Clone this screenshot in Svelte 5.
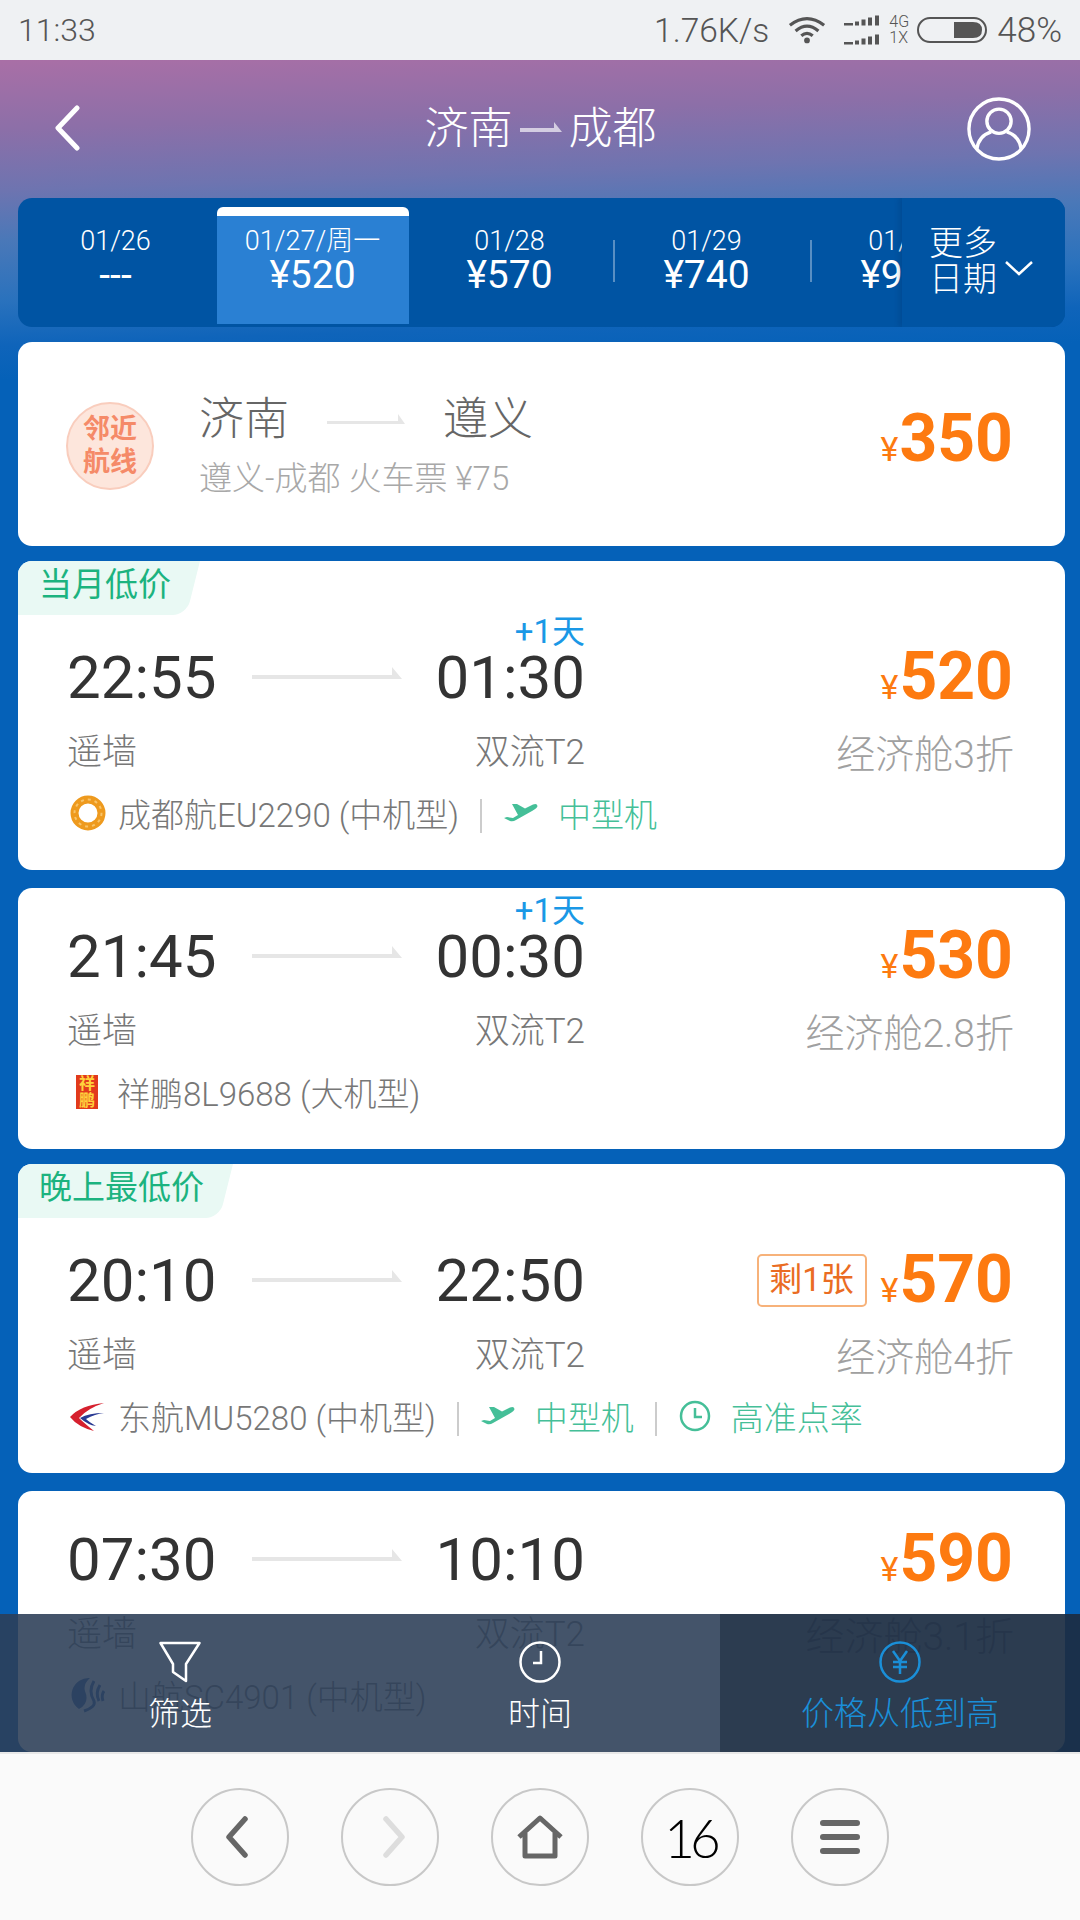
<script>
	const dates = [
		{ date: '01/26', price: '---' },
		{ date: '01/27/周一', price: '¥520', active: true },
		{ date: '01/28', price: '¥570', sep: true },
		{ date: '01/29', price: '¥740', sep: true },
		{ date: '01/30', price: '¥920' }
	];

	const flights = [
		{
			tag: '当月低价', dep: '22:55', arr: '01:30', plus: '+1天', price: 520, cabin: '经济舱3折',
			airline: '成都航EU2290 (中机型)', logo: 'eu', plane: true, gap: 18
		},
		{
			dep: '21:45', arr: '00:30', plus: '+1天', price: 530, cabin: '经济舱2.8折',
			airline: '祥鹏8L9688 (大机型)', logo: '8l', gap: 15
		},
		{
			tag: '晚上最低价', dep: '20:10', arr: '22:50', price: 570, cabin: '经济舱4折', left: '剩1张',
			airline: '东航MU5280 (中机型)', logo: 'mu', plane: true, onTime: true, gap: 18
		},
		{
			dep: '07:30', arr: '10:10', price: 590, cabin: '经济舱3.1折',
			airline: '山航SC4901 (中机型)', logo: 'sc', gap: 15
		}
	];
</script>

{#snippet arrow()}
	<svg class="arrow" width="150" height="16" viewBox="0 0 150 16"><polygon points="0,9 140,9 140,1 150,13 0,13" fill="#e6e6e6" /></svg>
{/snippet}

{#snippet plane()}
	<svg class="mini" width="34" height="20" viewBox="0 0 34 20"><path d="M8 1 L13 1 L21 5.5 L29 1.5 Q33 0 33.5 3 Q33.5 5 28 8 L12 17 Q9 19 6 18 L0 15 L3 14 L9 15 L14 12 Z" fill="#45bf98" /></svg>
{/snippet}

<div class="app">
	<div class="status">
		<span class="clock">11:33</span>
		<div class="status-right">
			<span class="speed">1.76K/s</span>
			<svg width="38" height="30" viewBox="0 0 40 30" fill="none" stroke="#555" stroke-width="3.4">
				<path d="M2 10 Q20 -4 38 10" />
				<path d="M8 16 Q20 6 32 16" />
				<path d="M14 21 Q20 16 26 21" />
				<circle cx="20" cy="26" r="3" fill="#555" stroke="none" />
			</svg>
			<svg class="signal" width="38" height="30" viewBox="0 0 38 30" fill="#555">
				<rect x="0" y="8" width="9" height="2.5" /><rect x="11" y="6.5" width="4" height="4" /><rect x="17.5" y="4.5" width="4" height="6" /><rect x="24" y="2.5" width="4" height="8" /><rect x="31" y="0.5" width="4" height="10" />
				<rect x="0" y="27" width="9" height="2.5" /><rect x="11" y="25.5" width="4" height="4" /><rect x="17.5" y="23.5" width="4" height="6" /><rect x="24" y="21.5" width="4" height="8" /><rect x="31" y="19.5" width="4" height="10" />
			</svg>
			<div class="net"><span>4G</span><span>1X</span></div>
			<svg width="71" height="26" viewBox="0 0 71 26" class="battery">
				<rect x="1" y="1" width="68" height="24" rx="12" fill="none" stroke="#555" stroke-width="2" />
				<path d="M37 5 H56 Q65 5 65 13 Q65 21 56 21 H37 Z" fill="#555" />
			</svg>
			<span class="pct">48%</span>
		</div>
	</div>

	<main class="page">
		<header class="head">
			<svg class="back" width="26" height="46" viewBox="0 0 26 46" fill="none" stroke="#fff" stroke-width="5" stroke-linecap="round" stroke-linejoin="round"><path d="M23 3 L4 23 L23 43" /></svg>
			<div class="route">
				<span>济南</span>
				<svg width="42" height="14" viewBox="0 0 42 14"><polygon points="0,6 34,6 34,0 42,10 0,10" fill="#fff" fill-opacity=".65" /></svg>
				<span>成都</span>
			</div>
			<svg class="user" width="64" height="64" viewBox="0 0 66 66" fill="none" stroke="#fff" stroke-width="3.5">
				<circle cx="33" cy="33" r="31" />
				<circle cx="33" cy="25" r="12.5" />
				<path d="M10 54 Q12 40 25 36 M56 54 Q54 40 41 36" />
			</svg>
		</header>

		<div class="dates">
			<div class="strip">
				{#each dates as d}
					<div class="cell" class:active={d.active} class:sep={d.sep}>
						<div class="d">{d.date}</div>
						<div class="p">{d.price}</div>
					</div>
				{/each}
			</div>
			<div class="more">
				<span>更多<br />日期</span>
				<svg width="30" height="16" viewBox="0 0 30 16" fill="none" stroke="#fff" stroke-width="2.5"><path d="M2 2 L15 14 L28 2" /></svg>
			</div>
		</div>

		<div class="list">
			<section class="card near">
				<div class="badge"><span>邻近</span><span>航线</span></div>
				<div class="near-info">
					<div class="near-route">
						<span>济南</span>
						<svg width="78" height="14" viewBox="0 0 78 14"><polygon points="0,8 71,8 71,1 78,11 0,11" fill="#e6e6e6" /></svg>
						<span>遵义</span>
					</div>
					<div class="near-sub">遵义-成都 火车票 ¥75</div>
				</div>
				<div class="price near-price"><small>¥</small>350</div>
			</section>

			{#each flights as f}
				<section class="card flight" class:tagged={f.tag} style="margin-bottom: {f.gap}px">
					{#if f.tag}
						<div class="tag">{f.tag}</div>
					{/if}
					<div class="times">
						<span class="time">{f.dep}</span>
						{@render arrow()}
						<span class="time arr">
							{f.arr}
							{#if f.plus}<em>{f.plus}</em>{/if}
						</span>
					</div>
					<div class="price">
						{#if f.left}<span class="left">{f.left}</span>{/if}
						<small>¥</small>{f.price}
					</div>
					<div class="ports"><span>遥墙</span><span>双流T2</span></div>
					<div class="cabin">{f.cabin}</div>
					<div class="meta">
						{#if f.logo === 'eu'}
							<svg class="logo" width="36" height="36" viewBox="0 0 36 36"><circle cx="18" cy="18" r="13.5" fill="none" stroke="#ee9a1e" stroke-width="8" /><circle cx="18" cy="18" r="13.5" fill="none" stroke="#f8c46a" stroke-width="2" stroke-dasharray="3 4" /></svg>
						{:else if f.logo === '8l'}
							<div class="logo stamp"><span>祥</span><span>鹏</span></div>
						{:else if f.logo === 'mu'}
							<svg class="logo" width="36" height="36" viewBox="0 0 36 36"><path d="M34 5 Q11 7 0 19 Q8 29 24 33 Q14 25 9 20 Q18 10 34 5 Z" fill="#d6202e" /><path d="M34 15 Q19 15 10 20 Q18 27 26 28 Q19 24 16 21 Q25 16 34 15 Z" fill="#2a3a93" /></svg>
						{:else}
							<svg class="logo" width="36" height="36" viewBox="0 0 36 36"><path d="M20 1 A17 17 0 0 0 9 32 Q20 26 15 14 Q13 7 20 1 Z" fill="#2a5ea8" /><path d="M24 4 Q18 14 24 24 Q26 30 14 34 M30 8 Q25 16 29 24 M34 14 Q31 18 33 24" stroke="#2a5ea8" stroke-width="3" fill="none" /></svg>
						{/if}
						<span class="airline">{f.airline}</span>
						{#if f.plane}
							<i class="bar"></i>
							{@render plane()}
							<span class="green">中型机</span>
						{/if}
						{#if f.onTime}
							<i class="bar"></i>
							<svg class="mini" width="32" height="32" viewBox="0 0 32 32" fill="none" stroke="#45bf98" stroke-width="2.5"><circle cx="16" cy="16" r="14" /><path d="M16 8 V17 H23" /></svg>
							<span class="green">高准点率</span>
						{/if}
					</div>
				</section>
			{/each}
		</div>

		<div class="filter">
			<div class="opt">
				<svg width="42" height="42" viewBox="0 0 42 42" fill="none" stroke="#fff" stroke-width="2.5" stroke-linejoin="round"><path d="M1.5 2 H40.5 L27 23 V40 L14 31 V23 Z" /></svg>
				<span>筛选</span>
			</div>
			<div class="opt">
				<svg width="42" height="42" viewBox="0 0 42 42" fill="none" stroke="#fff" stroke-width="2.5"><circle cx="21" cy="21" r="19.5" /><path d="M22 10 V22 H14" /></svg>
				<span>时间</span>
			</div>
			<div class="opt on">
				<svg width="42" height="42" viewBox="0 0 42 42" fill="none" stroke="#1a8fd8" stroke-width="2.5"><circle cx="21" cy="21" r="19.5" /><path d="M14 10 L21 20 L28 10 M21 20 V33 M14 21 H28 M14 26 H28" /></svg>
				<span>价格从低到高</span>
			</div>
		</div>
	</main>

	<nav class="nav">
		<div class="btn prev"><svg width="24" height="42" viewBox="0 0 24 42" fill="none" stroke="#666" stroke-width="5.5" stroke-linecap="round" stroke-linejoin="round"><path d="M20 3 L4 21 L20 39" /></svg></div>
		<div class="btn next"><svg width="24" height="42" viewBox="0 0 24 42" fill="none" stroke="#ddd" stroke-width="5.5" stroke-linecap="round" stroke-linejoin="round"><path d="M4 3 L20 21 L4 39" /></svg></div>
		<div class="btn"><svg width="46" height="44" viewBox="0 0 46 44" fill="none" stroke="#666" stroke-width="5" stroke-linejoin="round"><path d="M2 22 L23 3 L44 22 M8 18 V41 H38 V18" /></svg></div>
		<div class="btn num">16</div>
		<div class="btn lines"><i></i><i></i><i></i></div>
	</nav>
</div>

<style>
	:global(body) {
		margin: 0;
	}

	.app {
		width: 1080px;
		height: 1920px;
		display: flex;
		flex-direction: column;
		overflow: hidden;
		font-family: Roboto, 'Noto Sans CJK SC', sans-serif;
	}

	/* status bar */
	.status {
		flex: 0 0 60px;
		display: flex;
		align-items: center;
		justify-content: space-between;
		padding: 0 18px;
		box-sizing: border-box;
		background: #eff1f3;
		color: #555;
		font-size: 32px;
		font-weight: 300;
	}
	.status-right {
		display: flex;
		align-items: center;
	}
	.speed {
		font-size: 33.5px;
		margin-right: 19px;
	}
	.signal {
		margin-left: 18px;
	}
	.net {
		display: flex;
		flex-direction: column;
		width: 28px;
		margin-left: 7px;
		font-size: 16px;
		line-height: 16px;
	}
	.pct {
		font-size: 35px;
		margin-left: 9px;
	}

	/* page */
	.page {
		flex: 1;
		position: relative;
		overflow: hidden;
		background: linear-gradient(178deg, #a96fa6 0, #8c6fa8 70px, #6e74b0 130px, #4a78b8 180px, #2a72bd 240px, #0f64ba 285px, #0561b8 320px);
	}

	.head {
		height: 138px;
		display: flex;
		align-items: center;
		justify-content: space-between;
		padding: 0 49px 0 54px;
		box-sizing: border-box;
	}
	.back {
		margin-top: -2px;
	}
	.route {
		display: flex;
		align-items: center;
		gap: 7px;
		color: #fff;
		font-size: 44px;
		font-weight: 300;
		margin-top: -8px;
		margin-left: 34px;
	}
	.route svg {
		margin-top: 8px;
	}

	/* date strip */
	.dates {
		height: 129px;
		margin: 0 15px 0 18px;
		border-radius: 14px;
		background: #0054a3;
		position: relative;
		overflow: hidden;
		color: #fff;
	}
	.strip {
		display: flex;
		height: 100%;
		margin-left: -1px;
	}
	.cell {
		flex: 0 0 197px;
		position: relative;
		padding-top: 26px;
		box-sizing: border-box;
		text-align: center;
	}
	.cell.active {
		flex-basis: 192px;
		margin: 9px 2.5px 3px;
		padding-top: 8px;
		border-top: 9px solid #fff;
		border-radius: 6px 6px 0 0;
		background: #2a80d3;
	}
	.cell.sep::after {
		content: '';
		position: absolute;
		right: -7px;
		top: 42px;
		height: 42px;
		width: 2px;
		background: rgba(255, 255, 255, 0.35);
	}
	.d {
		font-size: 27px;
		line-height: 34px;
		font-weight: 300;
	}
	.p {
		font-size: 39px;
		line-height: 34px;
	}
	.more {
		position: absolute;
		top: 0;
		right: 0;
		bottom: 0;
		width: 163px;
		padding-left: 27px;
		box-sizing: border-box;
		display: flex;
		align-items: center;
		background: #0054a3;
		box-shadow: -3px 0 5px rgba(0, 40, 90, 0.18);
		font-size: 34px;
		line-height: 36px;
		font-weight: 300;
	}
	.more span {
		margin-top: -3px;
	}
	.more svg {
		margin: 10px 0 0 7px;
	}

	/* cards */
	.list {
		margin: 15px 15px 0 18px;
	}
	.card {
		position: relative;
		background: #fff;
		border-radius: 14px;
		box-sizing: border-box;
	}
	.near {
		height: 204px;
		margin-bottom: 15px;
		display: flex;
		align-items: center;
		padding: 0 52px 0 48px;
	}
	.badge {
		width: 88px;
		height: 88px;
		box-sizing: border-box;
		border: 2px solid #f9cdbd;
		border-radius: 50%;
		background: #fde6dc;
		color: #f58a68;
		font-size: 27px;
		font-weight: 700;
		line-height: 33px;
		display: flex;
		flex-direction: column;
		align-items: center;
		justify-content: center;
		margin-top: 3px;
	}
	.near-info {
		margin-left: 45px;
		flex: 1;
		margin-top: 1px;
	}
	.near-route {
		display: flex;
		align-items: center;
		color: #666;
		font-size: 45px;
		line-height: 60px;
		font-weight: 300;
	}
	.near-route svg {
		margin: 0 38px;
	}
	.near-sub {
		color: #a8a8a8;
		font-size: 33px;
		line-height: 42px;
		margin-top: 8px;
		font-weight: 300;
	}
	.near-price {
		margin-top: -1px;
	}

	.flight {
		height: 261px;
		padding: 38px 52px 0 49px;
		display: grid;
		grid-template-columns: 518px 1fr;
		grid-template-rows: 60px 44px 44px;
		row-gap: 21px;
		overflow: hidden;
	}
	.flight.tagged {
		height: 309px;
		padding-top: 86px;
	}
	.tag {
		position: absolute;
		left: 0;
		top: 0;
		height: 54px;
		padding: 0 29px 0 21px;
		isolation: isolate;
		color: #1cb37f;
		font-size: 33px;
		line-height: 48px;
		white-space: nowrap;
	}
	.tag::before {
		content: '';
		position: absolute;
		z-index: -1;
		left: -20px;
		right: 0;
		top: 0;
		bottom: 0;
		background: #e9f9f4;
		border-radius: 0 0 14px 0;
		transform-origin: top left;
		transform: skewX(-14deg);
	}
	.times {
		display: flex;
		align-items: center;
		justify-content: space-between;
	}
	.time {
		font-size: 60px;
		line-height: 60px;
		color: #333;
		position: relative;
		margin-top: 2px;
	}
	.arrow {
		margin: 0 2px 6px 4px;
	}
	.arr em {
		position: absolute;
		right: 0;
		top: -34px;
		font-size: 33px;
		line-height: 36px;
		font-style: normal;
		color: #1a98e6;
	}
	.price {
		display: flex;
		align-items: baseline;
		justify-content: flex-end;
		color: #fd7a10;
		font-size: 66px;
		line-height: 60px;
		font-weight: 700;
		margin-top: 0;
	}
	.price small {
		font-size: 34px;
		font-weight: 400;
		margin-right: 1px;
	}
	.left {
		align-self: center;
		margin: 0 14px 0 0;
		height: 53px;
		width: 110px;
		box-sizing: border-box;
		border: 2px solid #f7b27a;
		border-radius: 5px;
		color: #ea6c23;
		font-size: 33px;
		font-weight: 400;
		line-height: 48px;
		text-align: center;
	}
	.ports {
		display: flex;
		justify-content: space-between;
		color: #777;
		font-size: 35px;
		line-height: 44px;
		font-weight: 300;
		margin-top: 3px;
	}
	.cabin {
		text-align: right;
		color: #a0a0a0;
		font-size: 39px;
		line-height: 44px;
		margin: 5px -1px 0 0;
		font-weight: 300;
	}
	.meta {
		grid-column: 1 / 3;
		display: flex;
		align-items: center;
		margin-bottom: 4px;
		font-size: 33px;
		color: #777;
		font-weight: 300;
		white-space: nowrap;
	}
	.logo {
		margin-left: 3px;
		margin-right: 12px;
	}
	.stamp {
		width: 22px;
		height: 34px;
		margin-left: 9px;
		margin-right: 19px;
		background: #e23a1c;
		color: #ffd23c;
		font-size: 16px;
		font-weight: 700;
		line-height: 17px;
		display: flex;
		flex-direction: column;
		align-items: center;
	}
	.bar {
		width: 2px;
		height: 34px;
		margin: 6px 22px 0 21px;
		background: #ccc;
	}
	.mini {
		margin-right: 20px;
	}
	.green {
		color: #45bf98;
	}

	/* filter overlay */
	.filter {
		position: absolute;
		left: 0;
		right: 0;
		bottom: 0;
		height: 138px;
		display: grid;
		grid-template-columns: 360px 360px 360px;
		background: rgba(45, 63, 88, 0.89);
		color: #fff;
	}
	.opt {
		display: flex;
		flex-direction: column;
		align-items: center;
		padding-top: 27px;
		font-size: 32px;
		line-height: 40px;
		font-weight: 300;
	}
	.opt span {
		margin-top: 11px;
	}
	.opt.on {
		background: rgba(5, 20, 40, 0.38);
		color: #1a8fd8;
		font-size: 33px;
	}

	/* bottom nav */
	.nav {
		flex: 0 0 168px;
		box-sizing: border-box;
		display: flex;
		align-items: center;
		justify-content: center;
		gap: 52px;
		background: #fafafa;
		border-top: 2px solid #e8e8e8;
	}
	.btn {
		width: 98px;
		height: 98px;
		box-sizing: border-box;
		border: 2px solid #c8c8c8;
		border-radius: 50%;
		display: flex;
		flex-direction: column;
		align-items: center;
		justify-content: center;
	}
	.prev svg {
		margin-right: 7px;
	}
	.next svg {
		margin-left: 7px;
	}
	.num {
		font-family: Lato, sans-serif;
		font-size: 53px;
		font-weight: 300;
		letter-spacing: -5px;
		color: #000;
	}
	.lines {
		gap: 8px;
	}
	.lines i {
		width: 40px;
		height: 6px;
		border-radius: 3px;
		background: #666;
	}
</style>
